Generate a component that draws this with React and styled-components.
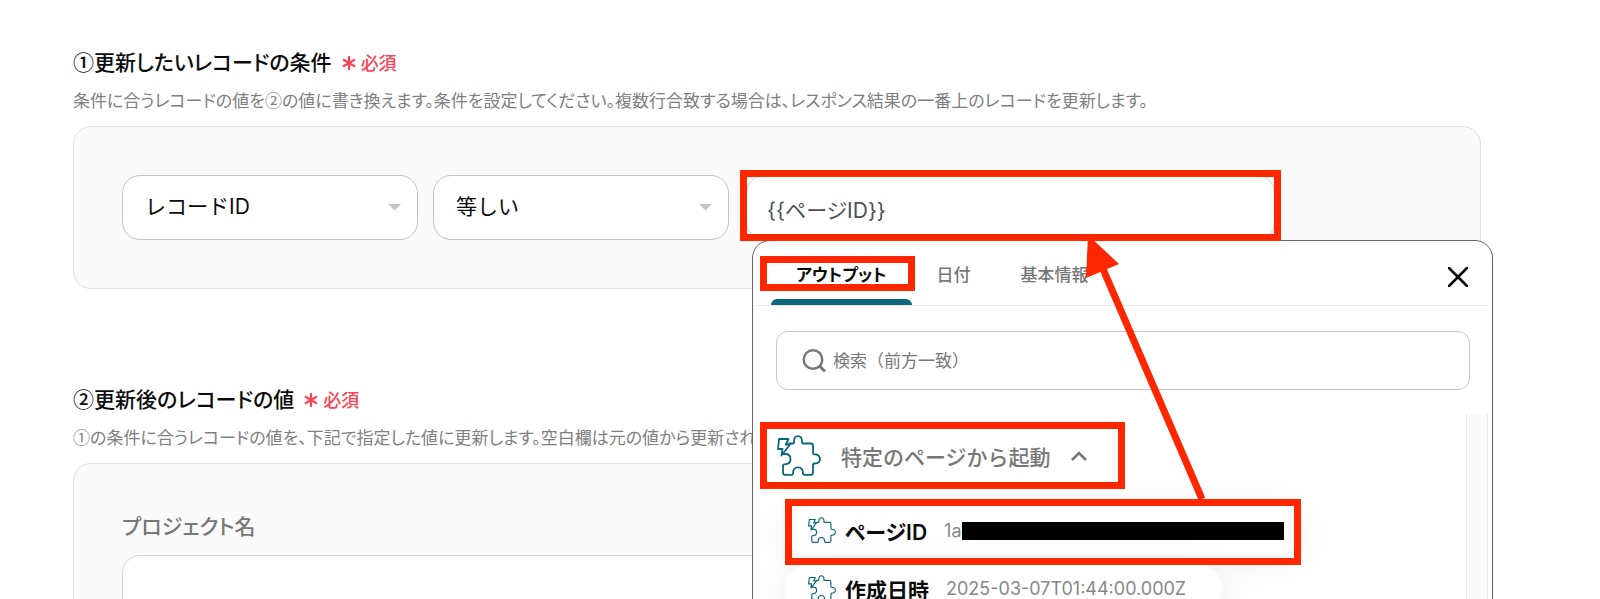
import React, { useState } from "react";
import styled, { createGlobalStyle, css } from "styled-components";

const GlobalStyle = createGlobalStyle`
  * {
    box-sizing: border-box;
  }

  body {
    margin: 0;
    background: #fff;
    color: #0b0b0b;
    font-family: Inter, "Noto Sans CJK JP", sans-serif;
  }

  button,
  input,
  select {
    font-family: inherit;
  }
`;

const Page = styled.main`
  height: 100vh;
  overflow: hidden;
  padding: 46px 119px 0 73px;
`;

const Section = styled.section`
  margin-bottom: 94px;
`;

const Heading = styled.h2`
  display: flex;
  align-items: center;
  gap: 10px;
  margin: 0 0 12px;
  font-family: "Noto Sans CJK JP", sans-serif;
  font-feature-settings: "palt";
  font-size: 21px;
  font-weight: 500;
  line-height: 30px;
`;

const Required = styled.span`
  display: flex;
  align-items: center;
  gap: 5px;
  padding-top: 2px;
  color: #ff4255;
  font-size: 18px;
  line-height: 28px;
`;

const Description = styled.p`
  margin: 0 0 14px;
  color: #808080;
  font-family: "Noto Sans CJK JP", sans-serif;
  font-feature-settings: "palt";
  font-size: 17px;
  font-weight: 400;
  line-height: 24px;
  white-space: nowrap;
`;

const Panel = styled.div`
  padding: 48px;
  background: #fafafa;
  border: 1px solid #dde1e6;
  border-radius: 18px;
`;

const Row = styled.div`
  display: flex;
  gap: 15px;
`;

const SelectBox = styled.div`
  position: relative;
  flex: 0 0 296px;

  svg {
    position: absolute;
    top: 29px;
    right: 17px;
    pointer-events: none;
  }
`;

const Select = styled.select`
  appearance: none;
  display: block;
  width: 100%;
  height: 65px;
  padding: 0 48px 2px 22px;
  background: #fff;
  border: 1px solid #c4c4c4;
  border-radius: 18px;
  color: #0b0b0b;
  font-size: 21px;
`;

const ValueBox = styled.div`
  position: relative;
  flex: 0 0 529px;
  margin-left: 2px;
`;

const TextInput = styled.input`
  display: block;
  width: 100%;
  height: 65px;
  padding: 2px 20px 0;
  background: #fff;
  border: 1px solid #ced4da;
  border-radius: 18px;
  color: #495057;
  font-feature-settings: "palt";
  font-size: 21px;
`;

const FieldLabel = styled.label`
  display: block;
  margin-bottom: 13px;
  color: #777;
  font-feature-settings: "palt";
  font-size: 21px;
  font-weight: 500;
  line-height: 30px;
`;

/* red frame laid over whatever it highlights */
const Frame = styled.span`
  position: absolute;
  z-index: 3;
  inset: ${(p) => p.$inset};
  border: 7px solid #ff2600;
  pointer-events: none;
`;

const Popup = styled.div`
  position: absolute;
  z-index: 2;
  top: 65px;
  left: 6px;
  width: 741px;
  height: 480px;
  padding: 0 4px;
  overflow: hidden;
  background: #fff;
  border: 1px solid #666;
  border-radius: 18px;
`;

const TabBar = styled.div`
  display: flex;
  height: 65px;
  padding: 0 20px 0 14px;
  border-bottom: 1px solid #e6e8ea;
`;

const Tab = styled.button`
  position: relative;
  padding: 4px 25px 0;
  background: none;
  border: 0;
  color: #777;
  font-feature-settings: "palt";
  font-size: 17px;
  font-weight: 500;
  line-height: 24px;

  ${(p) =>
    p.$active &&
    css`
      color: #0b0b0b;
      font-weight: 700;

      &::before {
        content: "";
        position: absolute;
        right: 0;
        bottom: 0;
        left: 0;
        height: 6px;
        background: #0b6780;
        border-radius: 6px 6px 0 0;
      }
    `}
`;

const CloseButton = styled.button`
  display: flex;
  align-items: center;
  margin-left: auto;
  padding: 8px 0 0;
  background: none;
  border: 0;
`;

const SearchBox = styled.label`
  display: flex;
  align-items: center;
  gap: 7px;
  height: 59px;
  margin: 25px 18px 24px 19px;
  padding: 0 25px;
  border: 1px solid #c8c8c8;
  border-radius: 12px;
`;

const SearchInput = styled.input`
  flex: 1;
  padding: 0;
  border: 0;
  outline: 0;
  font-size: 17px;

  &::placeholder {
    color: #777;
    opacity: 1;
  }
`;

const Results = styled.div`
  display: flex;
  height: 400px;
`;

const ResultList = styled.div`
  flex: 1;
  padding: 8px 0 0 3px;
`;

const ScrollTrack = styled.div`
  width: 22px;
  background: #fafafa;
  border: solid #e8e8e8;
  border-width: 0 1px;
`;

const GroupButton = styled.button`
  position: relative;
  display: flex;
  align-items: center;
  height: 67px;
  padding: 0 38px 0 17px;
  background: none;
  border: 0;
  color: #777;
  font-size: 21px;
  font-weight: 500;
`;

const GroupName = styled.span`
  margin: 0 20px;
`;

const Items = styled.ul`
  display: flex;
  flex-direction: column;
  align-items: flex-start;
  gap: 9px;
  margin: 17px 0 0;
  padding: 0 0 0 25px;
  list-style: none;
`;

const Item = styled.li`
  position: relative;
`;

const ItemButton = styled.button`
  display: flex;
  align-items: center;
  height: 49px;
  padding: 0 ${(p) => (p.$masked ? "17px" : "36px")} 0 23px;
  background: #fff;
  border: 0;
  border-radius: 25px;
  box-shadow: 0 4px 36px rgba(0, 0, 0, 0.08);
`;

const ItemName = styled.span`
  margin: 0 17px 0 9px;
  color: #0b0b0b;
  font-feature-settings: "palt";
  font-size: 21px;
  font-weight: 600;
`;

const ItemValue = styled.span`
  color: #888;
  font-size: 18px;
`;

const Mask = styled.span`
  width: 322px;
  height: 18px;
  background: #000;
`;

const Arrow = styled.svg`
  position: absolute;
  z-index: 4;
  top: 60px;
  left: 330px;
  pointer-events: none;
`;

const AsteriskIcon = () => (
  <svg width="14" height="20" viewBox="0 0 14 20" fill="none" stroke="#ff4255" strokeWidth="2.2">
    <path d="M7 4v14M1 7.500l12 7M13 7.500l-12 7" />
  </svg>
);

const CaretIcon = () => (
  <svg width="13" height="7" viewBox="0 0 13 7">
    <path d="M0 0h13L6.500 6.500z" fill="#c4c4c4" />
  </svg>
);

const PuzzleIcon = ({ width }) => (
  <svg width={width} viewBox="0 0 44 41" fill="none" stroke="#0b6780" strokeWidth="1.8" strokeLinejoin="round">
    <path d="M2 4H11.500L8.800 9.500H13L4.500 20.500L5.500 14H1z" />
    <path d="M11.500 8.500H16C17 8.500 17 7.500 17 6.500C17 3 18.500 1.200 21 1.200S25 3 25 6.500C25 7.500 25.500 8.500 26.500 8.500H34Q36 8.500 36 10.500V18Q36 19.300 37.500 19.300C41 19.300 43 21 43 24S41 28.500 37.500 28.500Q36 28.500 36 30V37.500Q36 39.800 34 39.800H27.500Q26 39.800 26 38C26 34 24 32.300 21 32.300S16 34 16 38Q16 39.800 14.500 39.800H8Q6 39.800 6 37.500V31Q6 29.300 7.500 29.300C11.500 29.300 13.500 27.500 13.500 24S11.500 19 8 19H6" />
  </svg>
);

const SearchIcon = () => (
  <svg width="24" height="24" viewBox="0 0 24 24" fill="none" stroke="#777" strokeWidth="2.4">
    <circle cx="11" cy="10.500" r="9.300" />
    <path d="M17.500 17l5.500 5.500" strokeWidth="3" />
  </svg>
);

const CloseIcon = () => (
  <svg width="20" height="20" viewBox="0 0 20 20" stroke="#0b0b0b" strokeWidth="2.6" strokeLinecap="round">
    <path d="M1 1l18 18M19 1L1 19" />
  </svg>
);

const ChevronIcon = () => (
  <svg width="16" height="10" viewBox="0 0 16 10" fill="none" stroke="#777" strokeWidth="2.6">
    <path d="M1 9l7-7 7 7" />
  </svg>
);

const tabs = ["アウトプット", "日付", "基本情報"];

const items = [
  { name: "ページID", value: "1a", masked: true },
  { name: "作成日時", value: "2025-03-07T01:44:00.000Z" },
];

const SectionHeading = ({ id, children }) => (
  <Heading id={id}>
    {children}
    <Required>
      <AsteriskIcon />
      必須
    </Required>
  </Heading>
);

const Dropdown = ({ option }) => (
  <SelectBox>
    <Select aria-labelledby="condition">
      <option>{option}</option>
    </Select>
    <CaretIcon />
  </SelectBox>
);

const OutputPopup = () => {
  const [active, setActive] = useState(tabs[0]);

  return (
    <Popup>
      <TabBar>
        {tabs.map((tab, i) => (
          <Tab key={tab} $active={tab === active} onClick={() => setActive(tab)}>
            {tab}
            {i === 0 && <Frame $inset="15px -3px 14px -11px" />}
          </Tab>
        ))}
        <CloseButton aria-label="閉じる">
          <CloseIcon />
        </CloseButton>
      </TabBar>
      <SearchBox>
        <SearchIcon />
        <SearchInput placeholder="検索（前方一致）" />
      </SearchBox>
      <Results>
        <ResultList>
          <GroupButton>
            <PuzzleIcon width={44} />
            <GroupName>特定のページから起動</GroupName>
            <ChevronIcon />
            <Frame $inset="0" />
          </GroupButton>
          <Items>
            {items.map((item) => (
              <Item key={item.name}>
                <ItemButton $masked={item.masked}>
                  <PuzzleIcon width={28} />
                  <ItemName>{item.name}</ItemName>
                  <ItemValue>{item.value}</ItemValue>
                  {item.masked && <Mask />}
                </ItemButton>
                {item.masked && <Frame $inset="-7px 0 -10px" />}
              </Item>
            ))}
          </Items>
        </ResultList>
        <ScrollTrack />
      </Results>
    </Popup>
  );
};

const App = () => {
  const [value, setValue] = useState("{{ページID}}");

  return (
    <>
      <GlobalStyle />
      <Page>
        <Section>
          <SectionHeading id="condition">①更新したいレコードの条件</SectionHeading>
          <Description>
            条件に合うレコードの値を②の値に書き換えます。条件を設定してください。複数行合致する場合は、レスポンス結果の一番上のレコードを更新します。
          </Description>
          <Panel>
            <Row>
              <Dropdown option="レコードID" />
              <Dropdown option="等しい" />
              <ValueBox>
                <TextInput
                  aria-labelledby="condition"
                  value={value}
                  onChange={(e) => setValue(e.target.value)}
                />
                <OutputPopup />
                <Frame $inset="-5px -6px -1px" />
                <Arrow width="130" height="266" viewBox="0 0 130 266" fill="#ff2600">
                  <path d="M12 0L43 29L10 43z" />
                  <path d="M27 34L126 264" stroke="#ff2600" strokeWidth="7" />
                </Arrow>
              </ValueBox>
            </Row>
          </Panel>
        </Section>
        <Section>
          <SectionHeading id="values">②更新後のレコードの値</SectionHeading>
          <Description>
            ①の条件に合うレコードの値を、下記で指定した値に更新します。空白欄は元の値から更新されません。
          </Description>
          <Panel>
            <FieldLabel htmlFor="project">プロジェクト名</FieldLabel>
            <TextInput id="project" />
          </Panel>
        </Section>
      </Page>
    </>
  );
};

export default App;
